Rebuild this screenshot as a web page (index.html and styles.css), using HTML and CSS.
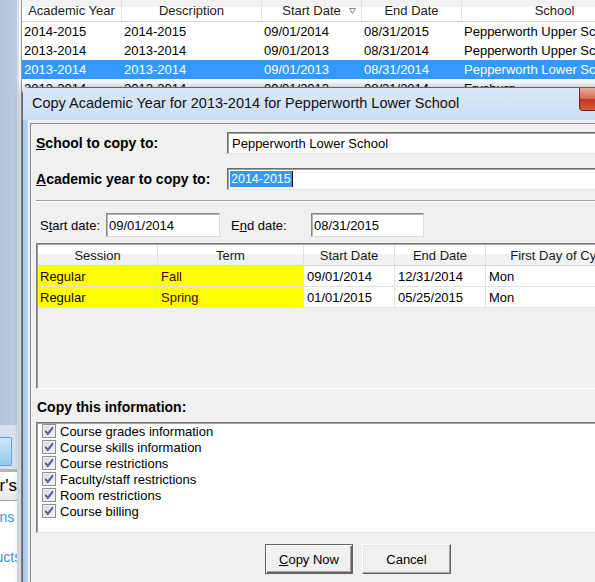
FILE: index.html
```html
<!DOCTYPE html>
<html lang="en">
<head>
	<meta charset="UTF-8">
	<meta name="viewport" content="width=device-width, initial-scale=1.0">
	<title>Copy Academic Year</title>
	<link rel="stylesheet" href="styles.css">
</head>
<body>
	<div class="screen">
		<div class="side">
			<div class="sideTop"></div>
			<div class="sideBox"><span class="sideBtn"></span></div>
			<div class="sideTab"><span>Calendar's</span></div>
			<div class="sideLinks">
				<span>Options</span>
				<span>Products</span>
			</div>
		</div>
		<div class="splitter"></div>
		<div class="yearList">
			<table class="years">
				<thead>
					<tr>
						<th class="cYear">Academic Year</th>
						<th class="cDesc">Description</th>
						<th class="cDate">Start Date <svg class="sortMark" width="7" height="6" viewBox="0 0 7 6"><path d="M0.5 0.5H6.5L3.5 5.5Z" fill="none" stroke="#8a8a8a"/></svg></th>
						<th class="cDate">End Date</th>
						<th class="cSchool">School</th>
					</tr>
				</thead>
				<tbody>
					<tr><td>2014-2015</td><td>2014-2015</td><td>09/01/2014</td><td>08/31/2015</td><td>Pepperworth Upper School</td></tr>
					<tr><td>2013-2014</td><td>2013-2014</td><td>09/01/2013</td><td>08/31/2014</td><td>Pepperworth Upper School</td></tr>
					<tr class="sel"><td>2013-2014</td><td>2013-2014</td><td>09/01/2013</td><td>08/31/2014</td><td>Pepperworth Lower School</td></tr>
					<tr><td>2013-2014</td><td>2013-2014</td><td>09/01/2013</td><td>08/31/2014</td><td>Frysburg</td></tr>
				</tbody>
			</table>
		</div>
		<!-- list -->

		<div class="dialog">
			<div class="titleBar">
				<span class="title">Copy Academic Year for 2013-2014 for Pepperworth Lower School</span>
				<span class="closeBtn"></span>
			</div>
			<div class="client">
				<div class="panel">
					<div class="field">
						<label><u>S</u>chool to copy to:</label>
						<div class="textBox">Pepperworth Lower School</div>
					</div>
					<div class="field">
						<label><u>A</u>cademic year to copy to:</label>
						<div class="textBox year"><span class="selText">2014-2015</span><span class="caret"></span></div>
					</div>
					<hr class="rule">
					<div class="dates">
						<label class="startLabel">S<u>t</u>art date:</label>
						<div class="dateBox">09/01/2014</div>
						<label class="endLabel">E<u>n</u>d date:</label>
						<div class="dateBox endBox">08/31/2015</div>
					</div>
					<div class="terms">
						<table class="termGrid">
							<thead>
								<tr>
									<th class="tSession">Session</th>
									<th class="tTerm">Term</th>
									<th class="tDate">Start Date</th>
									<th class="tDate">End Date</th>
									<th class="tCycle">First Day of Cycle</th>
								</tr>
							</thead>
							<tbody>
								<tr><td class="hl">Regular</td><td class="hl term">Fall</td><td>09/01/2014</td><td>12/31/2014</td><td>Mon</td></tr>
								<tr><td class="hl">Regular</td><td class="hl term">Spring</td><td>01/01/2015</td><td>05/25/2015</td><td>Mon</td></tr>
							</tbody>
						</table>
					</div>
					<h3 class="copyHead">Copy this information:</h3>
					<ul class="checks">
						<li><span class="check"><svg width="12" height="12" viewBox="0 0 12 12"><path d="M2.3 5.8L4.8 8.8L10 2.3" fill="none" stroke="#4b5f96" stroke-width="2"/></svg></span>Course grades information</li>
						<li><span class="check"><svg width="12" height="12" viewBox="0 0 12 12"><path d="M2.3 5.8L4.8 8.8L10 2.3" fill="none" stroke="#4b5f96" stroke-width="2"/></svg></span>Course skills information</li>
						<li><span class="check"><svg width="12" height="12" viewBox="0 0 12 12"><path d="M2.3 5.8L4.8 8.8L10 2.3" fill="none" stroke="#4b5f96" stroke-width="2"/></svg></span>Course restrictions</li>
						<li><span class="check"><svg width="12" height="12" viewBox="0 0 12 12"><path d="M2.3 5.8L4.8 8.8L10 2.3" fill="none" stroke="#4b5f96" stroke-width="2"/></svg></span>Faculty/staff restrictions</li>
						<li><span class="check"><svg width="12" height="12" viewBox="0 0 12 12"><path d="M2.3 5.8L4.8 8.8L10 2.3" fill="none" stroke="#4b5f96" stroke-width="2"/></svg></span>Room restrictions</li>
						<li><span class="check"><svg width="12" height="12" viewBox="0 0 12 12"><path d="M2.3 5.8L4.8 8.8L10 2.3" fill="none" stroke="#4b5f96" stroke-width="2"/></svg></span>Course billing</li>
					</ul>
					<div class="buttons">
						<button type="button" class="default"><u>C</u>opy Now</button>
						<button type="button" class="cancel">Cancel</button>
					</div>
				</div>
			</div>
		</div>
		<!-- dialog -->
	</div>
</body>
</html>
```

FILE: styles.css
```css
* {box-sizing:border-box;}
body {margin:0; font-family:"Liberation Sans", Arial, sans-serif; font-size:13px; color:#000; background:#fff;}
.screen {position:relative; width:595px; height:582px; overflow:hidden; display:flex; align-items:flex-start;}

/* left window edge */
.side {width:17px; height:582px; flex:none; display:flex; flex-direction:column; overflow:hidden;}
.sideTop {height:425px; flex:none; background:linear-gradient(90deg, #b2c5db, #bdcee2);}
.sideBox {height:44px; flex:none; padding-top:12px; background:#d6e1ed;}
.sideBtn {display:block; width:12px; height:29px; border:1px solid #6f9dcb; border-left:none; border-radius:0 2px 2px 0; background:linear-gradient(#cbe6f8, #95cbee);}
.sideTab {height:32px; flex:none; display:flex; justify-content:flex-end; align-items:center; border-top:3px solid #b4b4b4; border-bottom:1px solid #a0a0a0; background:linear-gradient(#fff, #e8e8e8); font-size:17px;}
.sideTab span {white-space:nowrap;}
.sideLinks {flex:1; display:flex; flex-direction:column; gap:24px; margin-left:-34px; padding-top:8px; background:#fff;}
.sideLinks span {color:#3a97d8; font-size:14px; line-height:16px; white-space:nowrap;}
.splitter {width:5px; height:582px; flex:none; background:linear-gradient(90deg, #d8e2ee 0 2px, #f2f2f2 2px 4px, #9a9a9a 4px);}

/* academic year list */
.yearList {flex:1; height:88px; overflow:hidden; background:#fff;}
.years {border-spacing:0; table-layout:fixed; width:626px;}
.years th {height:22px; padding:0; font-weight:normal; text-align:center; color:#222; border-right:1px solid #e3e3e3; border-bottom:1px solid #d5d5d5; background:linear-gradient(#f1f1f1 0 7px, #fff 7px); position:relative;}
.years .cYear {width:100px;}
.years .cDesc {width:140px;}
.years .cDate {width:100px;}
.years .cSchool {width:186px;}
.sortMark {position:absolute; left:87px; top:8px;}
.years td {height:19px; padding:0 0 0 2px; white-space:nowrap; overflow:hidden;}
.years tr.sel td {background:#3399ff; color:#fff;}

/* dialog */
.dialog {position:absolute; left:22px; top:87px; width:620px; height:520px; display:flex; flex-direction:column; border:1px solid #56687e; border-radius:7px 7px 0 0; background:linear-gradient(90deg, #a9c5e7, #c6dbf2 7px); box-shadow:0 0 9px rgba(0,0,0,.35);}
.titleBar {position:relative; height:32px; flex:none; display:flex; align-items:center; padding:0 0 2px 9px; font-size:14.5px; color:#111; background:linear-gradient(#dbe9f8, #cadef3);}
.title {white-space:nowrap;}
.closeBtn {position:absolute; left:556px; top:0; width:45px; height:23px; border:1px solid #6e2a20; border-top:none; border-radius:0 0 4px 4px; background:linear-gradient(#eaaa9b, #d66a52 48%, #c23a20 52%, #d8583c);}
.client {flex:1; margin-left:6px; padding:3px 0 0 1px; background:#f0f0f0; box-shadow:-1px 0 #e6eef7;}
.panel {height:100%; padding:0 0 0 5px; border-top:1px solid #8c8c8c; border-left:1px solid #8c8c8c;}

.field {display:flex; align-items:center; height:22px; margin-top:8px;}
.field + .field {margin-top:14px;}
.field label {width:191px; flex:none; font-size:14px; font-weight:bold;}
.textBox {flex:1; height:22px; display:flex; align-items:center; padding-left:4px; border:1px solid; border-color:#6d6d6d #e3e3e3 #e3e3e3 #6d6d6d; box-shadow:inset 1px 1px #a0a0a0; background:#fff; white-space:nowrap;}
.textBox.year {padding-left:2px; font-size:12.5px;}
.selText {padding:0 1px; line-height:16px; background:#3399ff; color:#fff;}
.caret {width:1px; height:16px; background:#111;}
.rule {height:0; margin:10px 0 0; border:0; border-top:1px solid #a0a0a0; border-bottom:1px solid #fff;}

.dates {display:flex; align-items:center; height:24px; margin-top:11px;}
.startLabel {width:66px; margin-left:4px;}
.endLabel {width:80px; margin-left:11px;}
.dateBox {width:114px; height:24px; display:flex; align-items:center; padding-left:2px; border:1px solid; border-color:#8a8a8a #dcdcdc #dcdcdc #8a8a8a; box-shadow:inset 1px 1px #b4b4b4; background:#fff;}
.dateBox.endBox {width:113px;}

.terms {height:146px; margin-top:6px; padding:1px 0 0 1px; overflow:hidden; border:1px solid; border-color:#7b7b7b #fff #fff #7b7b7b; box-shadow:inset 1px 1px #a0a0a0; background:#f0f0f0;}
.termGrid {border-spacing:0; table-layout:fixed; width:600px;}
.termGrid th {height:21px; padding:0; font-weight:normal; text-align:center; color:#1a1a1a; border-right:1px solid #e0e0e0; border-bottom:1px solid #d5d5d5; background:linear-gradient(#fff 0 9px, #f1f2f3 9px);}
.termGrid .tSession {width:120px;}
.termGrid .tTerm {width:146px;}
.termGrid .tDate {width:91px;}
.termGrid .tCycle {width:152px;}
.termGrid td {height:21px; padding:0 0 0 3px; white-space:nowrap; border-right:1px solid #e3e3e3; border-bottom:1px solid #e3e3e3; background:#fff;}
.termGrid td.hl {background:#ffff00; color:#1a0000; padding-left:2px;}
.termGrid td.term {padding-left:3px; color:#4a0000;}

.copyHead {margin:10px 0 0 1px; font-size:14px; line-height:16px; font-weight:bold;}
.checks {height:111px; margin:7px 0 0; padding:0 0 0 5px; list-style:none; border:1px solid; border-color:#7b7b7b #e3e3e3 #e3e3e3 #7b7b7b; box-shadow:inset 1px 1px #a0a0a0; background:#fff;}
.checks li {display:flex; align-items:center; height:16px; white-space:nowrap;}
.check {width:14px; height:14px; flex:none; margin-right:4px; display:flex; align-items:center; justify-content:center; border:1px solid #8e8f8f; background:linear-gradient(135deg, #d6d7d8, #f7f7f7); box-shadow:inset 0 0 0 1px #f2f2f2;}

.buttons {display:flex; gap:9px; margin:11px 0 0 229px;}
.buttons button {width:88px; height:30px; padding:0; font-family:"Liberation Sans", Arial, sans-serif; font-size:13px; color:#000; background:#f0f0f0; border:1px solid; border-color:#fff #646464 #646464 #fff; box-shadow:inset -1px -1px #a0a0a0, inset 1px 1px #e3e3e3;}
.buttons button.default {border-color:#646464; box-shadow:inset 1px 1px #fff, inset -1px -1px #646464, inset -2px -2px #a0a0a0;}
.buttons button.cancel {width:89px;}
```
